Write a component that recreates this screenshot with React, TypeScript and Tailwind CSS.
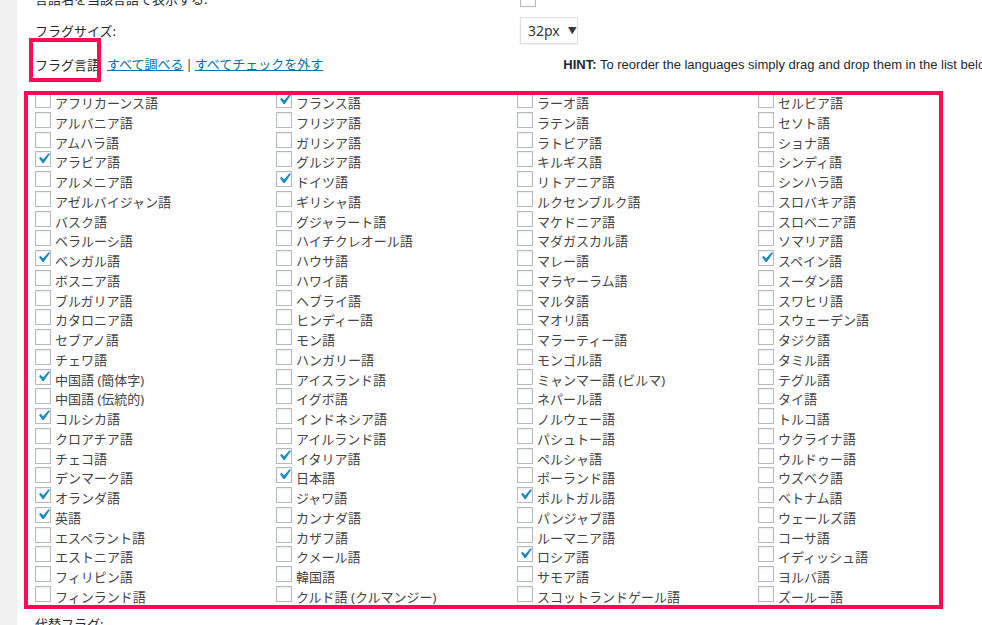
import React from "react";

type Lang = [string, boolean?];

const COLUMNS: Lang[][] = [
  [
    ["アフリカーンス語"], ["アルバニア語"], ["アムハラ語"], ["アラビア語", true], ["アルメニア語"],
    ["アゼルバイジャン語"], ["バスク語"], ["ベラルーシ語"], ["ベンガル語", true], ["ボスニア語"],
    ["ブルガリア語"], ["カタロニア語"], ["セブアノ語"], ["チェワ語"], ["中国語 (簡体字)", true],
    ["中国語 (伝統的)"], ["コルシカ語", true], ["クロアチア語"], ["チェコ語"], ["デンマーク語"],
    ["オランダ語", true], ["英語", true], ["エスペラント語"], ["エストニア語"], ["フィリピン語"],
    ["フィンランド語"],
  ],
  [
    ["フランス語", true], ["フリジア語"], ["ガリシア語"], ["グルジア語"], ["ドイツ語", true],
    ["ギリシャ語"], ["グジャラート語"], ["ハイチクレオール語"], ["ハウサ語"], ["ハワイ語"],
    ["ヘブライ語"], ["ヒンディー語"], ["モン語"], ["ハンガリー語"], ["アイスランド語"],
    ["イグボ語"], ["インドネシア語"], ["アイルランド語"], ["イタリア語", true], ["日本語", true],
    ["ジャワ語"], ["カンナダ語"], ["カザフ語"], ["クメール語"], ["韓国語"],
    ["クルド語 (クルマンジー)"],
  ],
  [
    ["ラーオ語"], ["ラテン語"], ["ラトビア語"], ["キルギス語"], ["リトアニア語"],
    ["ルクセンブルク語"], ["マケドニア語"], ["マダガスカル語"], ["マレー語"], ["マラヤーラム語"],
    ["マルタ語"], ["マオリ語"], ["マラーティー語"], ["モンゴル語"], ["ミャンマー語 (ビルマ)"],
    ["ネパール語"], ["ノルウェー語"], ["パシュトー語"], ["ペルシャ語"], ["ポーランド語"],
    ["ポルトガル語", true], ["パンジャブ語"], ["ルーマニア語"], ["ロシア語", true], ["サモア語"],
    ["スコットランドゲール語"],
  ],
  [
    ["セルビア語"], ["セソト語"], ["ショナ語"], ["シンディ語"], ["シンハラ語"],
    ["スロバキア語"], ["スロベニア語"], ["ソマリア語"], ["スペイン語", true], ["スーダン語"],
    ["スワヒリ語"], ["スウェーデン語"], ["タジク語"], ["タミル語"], ["テグル語"],
    ["タイ語"], ["トルコ語"], ["ウクライナ語"], ["ウルドゥー語"], ["ウズベク語"],
    ["ベトナム語"], ["ウェールズ語"], ["コーサ語"], ["イディッシュ語"], ["ヨルバ語"],
    ["ズールー語"],
  ],
];

function Checkbox({ checked }: { checked?: boolean }) {
  return (
    <span className="relative block h-[16px] w-[16px] shrink-0 border border-[#b4b9be] bg-white shadow-[inset_0_1px_2px_rgba(0,0,0,0.07)]">
      {checked && (
        <svg
          viewBox="0 0 20 20"
          className="absolute left-[-3px] top-[-4px] h-[21px] w-[21px]"
        >
          <path
            d="M14.83 4.89l1.34.94-5.81 8.38H9.02L5.78 9.67l1.34-1.25 2.57 2.4z"
            fill="#1e8cbe"
          />
        </svg>
      )}
    </span>
  );
}

export default function App() {
  return (
    <div
      className="flex h-[625px] w-[982px] overflow-hidden bg-white text-[13px] text-[#444]"
      style={{ fontFamily: '"Noto Sans", "Noto Sans CJK JP", sans-serif' }}
    >
      <div className="w-[17px] shrink-0 bg-[#f1f1f1]" />
      <div className="min-w-0 flex-1 pl-[18px]">
        {/* Display names row */}
        <div className="-mt-[11px] flex h-[20px] items-center">
          <span className="w-[485px] leading-[20px] text-[#23282d]">言語名を当該言語で表示する:</span>
          <Checkbox />
        </div>

        {/* Flag size */}
        <div className="mt-[8px] flex h-[27px] items-center">
          <span className="w-[485px] leading-[20px] text-[#23282d]">フラグサイズ:</span>
          <div className="flex h-[27px] w-[58px] items-center border border-[#ddd] bg-white pl-[7px] text-[14px] text-[#32373c] shadow-[0_1px_2px_rgba(0,0,0,0.07)]">
            <span>32px</span>
            <span className="ml-[8px] text-[9px]">▼</span>
          </div>
        </div>

        {/* Flag languages header */}
        <div className="mt-[11px] flex h-[20px] items-center whitespace-nowrap">
          <span className="relative leading-[20px] text-[#23282d]">
            フラグ言語
            <span className="pointer-events-none absolute -left-[6px] -top-[17px] h-[44px] w-[72px] border-4 border-[#ff0a55]" />
          </span>
          <a className="ml-[7px] text-[#0073aa] underline">すべて調べる</a>
          <span className="mx-[2px] text-[#444]">|</span>
          <a className="text-[#0073aa] underline">すべてチェックを外す</a>
          <span
            className="ml-[240px] text-[13px] text-[#23282d]"
            style={{ fontFamily: '"Liberation Sans", Arial, sans-serif' }}
          >
            <b className="font-bold">HINT:</b> To reorder the languages simply drag and drop them in the list below.
          </span>
        </div>

        {/* Language grid */}
        <div className="relative mt-[15px] flex">
          {COLUMNS.map((col, ci) => (
            <div key={ci} className="flex w-[241px] shrink-0 flex-col">
              {col.map(([name, checked]) => (
                <label key={name} className="flex h-[19.75px] items-start whitespace-nowrap">
                  <span className="mt-[2px]">
                    <Checkbox checked={checked} />
                  </span>
                  <span className="ml-[4px] mt-[3px] leading-[20px]">{name}</span>
                </label>
              ))}
            </div>
          ))}
          <div className="pointer-events-none absolute -left-[11px] top-[1px] h-[518px] w-[919px] border-4 border-[#ff0a55]" />
        </div>

        <div className="mt-[10px] leading-[20px] text-[#23282d]">代替フラグ:</div>
      </div>
    </div>
  );
}
